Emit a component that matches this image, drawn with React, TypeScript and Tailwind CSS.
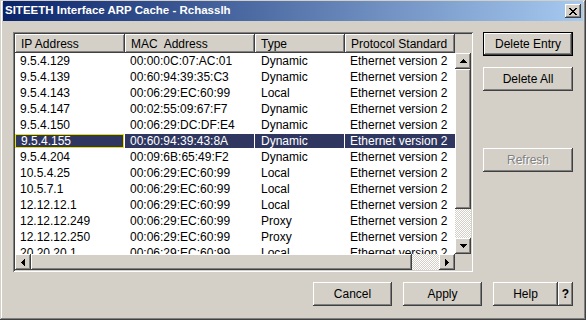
import type { ReactNode } from "react";

type Row = { ip: string; mac: string; type: string };

const rows: Row[] = [
  { ip: "9.5.4.129", mac: "00:00:0C:07:AC:01", type: "Dynamic" },
  { ip: "9.5.4.139", mac: "00:60:94:39:35:C3", type: "Dynamic" },
  { ip: "9.5.4.143", mac: "00:06:29:EC:60:99", type: "Local" },
  { ip: "9.5.4.147", mac: "00:02:55:09:67:F7", type: "Dynamic" },
  { ip: "9.5.4.150", mac: "00:06:29:DC:DF:E4", type: "Dynamic" },
  { ip: "9.5.4.155", mac: "00:60:94:39:43:8A", type: "Dynamic" },
  { ip: "9.5.4.204", mac: "00:09:6B:65:49:F2", type: "Dynamic" },
  { ip: "10.5.4.25", mac: "00:06:29:EC:60:99", type: "Local" },
  { ip: "10.5.7.1", mac: "00:06:29:EC:60:99", type: "Local" },
  { ip: "12.12.12.1", mac: "00:06:29:EC:60:99", type: "Local" },
  { ip: "12.12.12.249", mac: "00:06:29:EC:60:99", type: "Proxy" },
  { ip: "12.12.12.250", mac: "00:06:29:EC:60:99", type: "Proxy" },
  { ip: "20.20.20.1", mac: "00:06:29:EC:60:99", type: "Local" },
];

const SELECTED = 5;

// classic 3d edges
const raised =
  "shadow-[inset_-1px_-1px_#404040,inset_1px_1px_#ffffff,inset_-2px_-2px_#808080,inset_2px_2px_#d4d0c8]";
const headerEdge =
  "shadow-[inset_-1px_-1px_#404040,inset_1px_1px_#ffffff,inset_-2px_-2px_#808080]";
const sunken =
  "shadow-[inset_1px_1px_#808080,inset_-1px_-1px_#ffffff,inset_2px_2px_#404040,inset_-2px_-2px_#d4d0c8]";
const track =
  "bg-[repeating-conic-gradient(#d4d0c8_0%_25%,#ffffff_0%_50%)] bg-[length:2px_2px]";

function Arrow({ dir }: { dir: "up" | "down" | "left" | "right" }) {
  const pts = {
    up: "3.5,0 7,4 0,4",
    down: "0,0 7,0 3.5,4",
    left: "0,3.5 4,0 4,7",
    right: "0,0 4,3.5 0,7",
  }[dir];
  const horiz = dir === "left" || dir === "right";
  return (
    <div className={`w-[16px] h-[16px] shrink-0 bg-[#d4d0c8] ${raised} flex items-center justify-center`}>
      <svg width={horiz ? 4 : 7} height={horiz ? 7 : 4} shapeRendering="crispEdges">
        <polygon points={pts} fill="#000" />
      </svg>
    </div>
  );
}

function Button({
  children,
  w,
  isDefault,
  disabled,
  bold,
}: {
  children: ReactNode;
  w: string;
  isDefault?: boolean;
  disabled?: boolean;
  bold?: boolean;
}) {
  return (
    <div
      className={`${w} h-[24px] shrink-0 bg-[#d4d0c8] flex items-center justify-center text-[12px] ${
        isDefault ? "border border-black" : ""
      } ${raised} ${bold ? "font-bold" : ""} ${
        disabled ? "text-[#808080] [text-shadow:1px_1px_0_#ffffff]" : "text-black"
      }`}
    >
      {children}
    </div>
  );
}

function HeaderCell({ label, w }: { label: string; w: string }) {
  return (
    <div className={`${w} h-full shrink-0 bg-[#d4d0c8] ${headerEdge} pl-[6px] flex items-center text-[12px] text-black whitespace-pre`}>
      {label}
    </div>
  );
}

function Cell({ text, w, pl, sel, focus, gap }: { text: string; w: string; pl: string; sel: boolean; focus?: boolean; gap?: boolean }) {
  return (
    <div className={`${w} h-full shrink-0 flex ${gap ? "pr-[1px]" : ""} ${sel ? "py-[1px]" : ""}`}>
      <div
        className={`flex-1 flex items-center whitespace-nowrap overflow-hidden ${pl} ${
          sel ? "bg-[#2f3760] text-white" : "text-black"
        } ${focus ? "border border-[#e8e000] pl-[4px]" : ""}`}
      >
        {text}
      </div>
    </div>
  );
}

function ListBox() {
  return (
    <div className={`w-[460px] h-[240px] shrink-0 p-[2px] ${sunken}`}>
      <div className="grid grid-cols-[440px_16px] grid-rows-[19px_201px_16px] bg-[#d4d0c8]">
        <div className="flex">
          <HeaderCell label="IP Address" w="w-[110px]" />
          <HeaderCell label="MAC  Address" w="w-[130px]" />
          <HeaderCell label="Type" w="w-[90px]" />
          <HeaderCell label="Protocol Standard" w="w-[110px]" />
        </div>
        <div />
        <div className="bg-white overflow-hidden text-[12px]">
          {rows.map((r, i) => {
            const sel = i === SELECTED;
            return (
              <div key={r.ip} className="h-[16px] flex">
                <Cell text={r.ip} w="w-[110px]" pl="pl-[5px]" sel={sel} focus={sel} gap />
                <Cell text={r.mac} w="w-[130px]" pl="pl-[5px]" sel={sel} gap />
                <Cell text={r.type} w="w-[90px]" pl="pl-[6px]" sel={sel} gap />
                <Cell text="Ethernet version 2" w="w-[110px]" pl="pl-[5px]" sel={sel} />
              </div>
            );
          })}
        </div>
        <div className="flex flex-col">
          <Arrow dir="up" />
          <div className={`h-[140px] shrink-0 bg-[#d4d0c8] ${raised}`} />
          <div className={`flex-1 ${track}`} />
          <Arrow dir="down" />
        </div>
        <div className="flex">
          <Arrow dir="left" />
          <div className={`w-[381px] shrink-0 bg-[#d4d0c8] ${raised}`} />
          <div className={`flex-1 ${track}`} />
          <Arrow dir="right" />
        </div>
        <div className="bg-[#d4d0c8]" />
      </div>
    </div>
  );
}

export default function App() {
  return (
    <div
      className="w-[586px] h-[320px] bg-[#d4d0c8] flex flex-col font-['Liberation_Sans',Arial,sans-serif] shadow-[inset_-1px_-1px_#404040,inset_1px_1px_#d4d0c8,inset_-2px_-2px_#808080,inset_2px_2px_#ffffff] overflow-hidden"
    >
      {/* title bar */}
      <div className="mt-[1px] mx-[3px] h-[20px] shrink-0 flex items-center bg-[linear-gradient(to_right,#0a246a,#a6caf0)] pl-[2px] pr-[2px]">
        <span className="text-white font-bold text-[11.5px] whitespace-nowrap">SITEETH Interface ARP Cache - Rchasslh</span>
        <div className={`ml-auto w-[16px] h-[14px] bg-[#d4d0c8] ${raised} flex items-center justify-center`}>
          <svg width="8" height="7" shapeRendering="crispEdges">
            <path d="M0 0h2v1H0zM6 0h2v1H6zM1 1h2v1H1zM5 1h2v1H5zM2 2h4v1H2zM3 3h2v1H3zM2 4h4v1H2zM1 5h2v1H1zM5 5h2v1H5zM0 6h2v1H0zM6 6h2v1H6z" fill="#000" />
          </svg>
        </div>
      </div>

      <div className="flex mt-[11px] pl-[13px]">
        <ListBox />
        <div className="ml-[10px] flex flex-col">
          <Button w="w-[90px]" isDefault>Delete Entry</Button>
          <div className="mt-[11px]">
            <Button w="w-[90px]">Delete All</Button>
          </div>
          <div className="mt-[57px]">
            <Button w="w-[90px]" disabled>Refresh</Button>
          </div>
        </div>
      </div>

      <div className="flex mt-[10px] pl-[313px]">
        <Button w="w-[79px]">Cancel</Button>
        <div className="ml-[11px]">
          <Button w="w-[79px]">Apply</Button>
        </div>
        <div className="ml-[11px] flex">
          <Button w="w-[65px]">Help</Button>
          <Button w="w-[15px]" bold>?</Button>
        </div>
      </div>
    </div>
  );
}
